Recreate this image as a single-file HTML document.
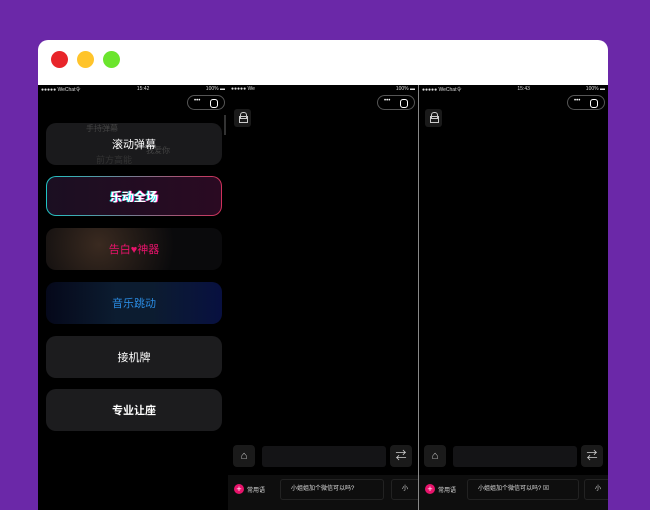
<!DOCTYPE html>
<html><head><meta charset="utf-8"><style>
*{margin:0;padding:0;box-sizing:border-box}
body{width:650px;height:500px;background:#6b28a8;position:relative;overflow:hidden;font-family:"Liberation Sans","Noto Sans CJK SC",sans-serif}
.win{position:absolute;left:38px;top:40px;width:570px;height:470px;background:#fff;border-radius:10px 10px 0 0;overflow:hidden}
.dot{position:absolute;top:11px;width:17px;height:17px;border-radius:50%}
.scr{position:absolute;top:45px;height:425px;background:#000;color:#fff}
.sb{position:absolute;top:1px;left:3px;right:3px;font-size:5px;color:#ddd;display:flex;justify-content:space-between}
.cap{position:absolute;top:10px;right:3px;width:38px;height:15px;border:1px solid #555;border-radius:8px}
.cap:before{content:"•••";position:absolute;left:6px;top:2px;font-size:6px}
.cap:after{content:"";position:absolute;left:22px;top:3px;width:6px;height:7px;border:1.5px solid #fff;border-radius:3px}
.card{position:absolute;left:8px;width:176px;height:42px;border-radius:10px;background:#1c1c1e;display:flex;align-items:center;justify-content:center;font-size:11px;overflow:hidden}
.lock{position:absolute;top:24px;left:6px;width:17px;height:18px;background:#1a1a1a;border-radius:3px}
.lock:after{content:"";position:absolute;left:5px;top:7px;width:7px;height:5px;border:1px solid #ccc}
.lock:before{content:"";position:absolute;left:6px;top:3px;width:5px;height:5px;border:1px solid #ccc;border-radius:3px 3px 0 0}
.bb{position:absolute;top:360px;width:22px;height:22px;background:#1a1a1a;border-radius:4px;color:#ccc;font-size:11px;text-align:center;line-height:22px}
.inp{position:absolute;top:361px;height:21px;background:#141416;border-radius:3px}
.bot{position:absolute;top:390px;left:0;right:0;height:35px;background:#0e0e0e;font-size:6px;color:#ddd}
.plus{position:absolute;left:6px;top:9px;width:10px;height:10px;border-radius:50%;background:#e8136b;color:#fff;font-size:9px;line-height:10px;text-align:center}
.chip{position:absolute;top:4px;height:21px;border:1px solid #222;border-radius:3px;line-height:19px;padding-left:10px;white-space:nowrap;overflow:hidden}
</style></head><body>
<div class="win">
<div class="dot" style="left:13px;background:#e8252a"></div>
<div class="dot" style="left:39px;background:#ffc42b"></div>
<div class="dot" style="left:65px;background:#6be52d"></div>

<div class="scr" style="left:0;width:190px">
<div class="sb"><span>●●●●● WeChat令</span><span>15:42</span><span>100% ▬</span></div>
<div class="cap"></div>
<div style="position:absolute;left:186px;top:30px;width:2px;height:20px;background:#333"></div>
<div class="card" style="top:38px;color:#fff;background:#1a1a1c"><span style="position:absolute;left:40px;top:0;font-size:8px;color:#444">手持弹幕</span><span style="position:absolute;left:50px;top:30px;font-size:9px;color:#333">前方高能</span><span style="position:absolute;left:100px;top:22px;font-size:8px;color:#444">我爱你</span><span style="position:relative">滚动弹幕</span></div>
<div class="card" style="top:91px;height:40px;border:1.5px solid transparent;background:linear-gradient(90deg,#1b0f22,#2a0a22) padding-box,linear-gradient(90deg,#20c4c4,#d0305a) border-box;font-weight:bold;font-size:12px;text-shadow:-1px 0 #1ee,1px 0 #f2a">乐动全场</div>
<div class="card" style="top:143px;background:radial-gradient(circle at 30% 40%,#3a2a20 0,#0a0a0c 60%);color:#e8136b">告白♥神器</div>
<div class="card" style="top:197px;background:linear-gradient(90deg,#05081a,#0c1c30 40%,#0c1c30 60%,#081040);color:#2a8ae0">音乐跳动</div>
<div class="card" style="top:251px">接机牌</div>
<div class="card" style="top:304px;font-weight:bold">专业让座</div>
</div>

<div class="scr" style="left:190px;width:190px">
<div class="sb"><span>●●●●● We</span><span></span><span>100% ▬</span></div>
<div class="cap"></div>
<div class="lock"></div>
<div class="bb" style="left:5px">⌂</div>
<div class="inp" style="left:34px;width:124px"></div>
<div class="bb" style="left:162px">⇄</div>
<div class="bot"><div class="plus">+</div><span style="position:absolute;left:19px;top:10px">常用语</span><div class="chip" style="left:52px;width:104px">小姐姐加个微信可以吗?</div><div class="chip" style="left:163px;width:30px">小</div></div>
</div>
<div style="position:absolute;left:380px;top:45px;width:1px;height:425px;background:#888"></div>

<div class="scr" style="left:381px;width:189px">
<div class="sb"><span>●●●●● WeChat令</span><span>15:43</span><span>100% ▬</span></div>
<div class="cap"></div>
<div class="lock"></div>
<div class="bb" style="left:5px">⌂</div>
<div class="inp" style="left:34px;width:124px"></div>
<div class="bb" style="left:162px">⇄</div>
<div class="bot"><div class="plus">+</div><span style="position:absolute;left:19px;top:10px">常用语</span><div class="chip" style="left:48px;width:112px">小姐姐加个微信可以吗? ⊠</div><div class="chip" style="left:165px;width:30px">小</div></div>
</div>
</div>
</body></html>
